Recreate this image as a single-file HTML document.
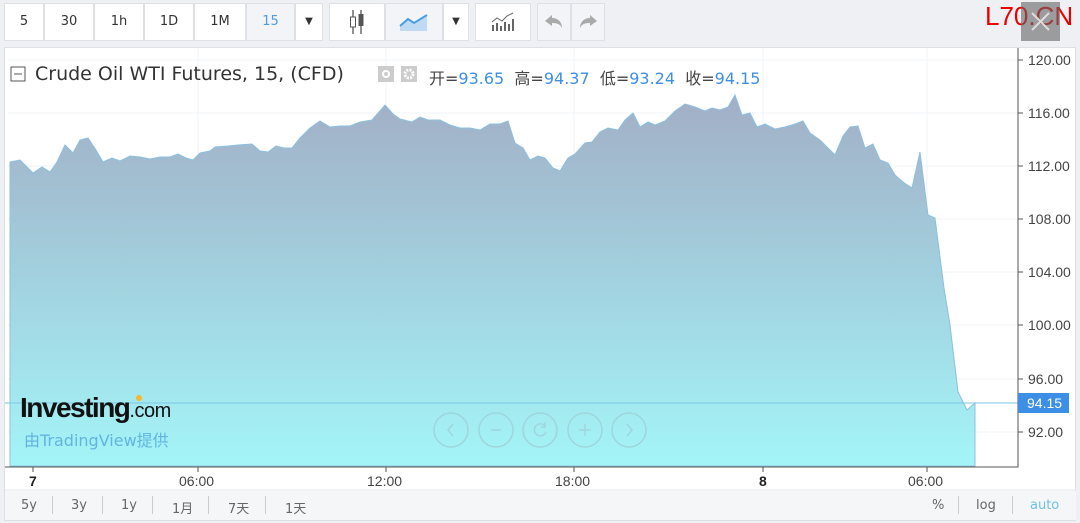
<!DOCTYPE html>
<html><head><meta charset="utf-8"><style>
*{margin:0;padding:0;box-sizing:border-box}
body{width:1080px;height:523px;background:#eef0f3;font-family:"DejaVu Sans","Liberation Sans","Noto Sans CJK SC",sans-serif;position:relative;overflow:hidden}
.b{position:absolute;top:3px;height:38px;background:#fff;border:1px solid #dde0e5;font-size:13px;color:#333;text-align:center;line-height:36px}
.t{position:absolute;font-family:"Liberation Sans",sans-serif;font-size:14px;color:#444}
.f{position:absolute;font-size:13px;color:#666;top:498px}
.sep{position:absolute;top:496px;width:1px;height:18px;background:#ccc}
</style></head><body>
<div class="b" style="left:4px;width:40px">5</div>
<div class="b" style="left:44px;width:50px">30</div>
<div class="b" style="left:94px;width:50px">1h</div>
<div class="b" style="left:144px;width:50px">1D</div>
<div class="b" style="left:194px;width:52px">1M</div>
<div class="b" style="left:246px;width:49px;background:#f2f4f7;color:#4a9de0">15</div>
<div class="b" style="left:295px;width:28px;font-size:10px">▼</div>
<div class="b" style="left:329px;width:56px"><svg width="20" height="26" viewBox="0 0 20 26" style="margin-top:5px"><path d="M6 1v24M14 1v24" stroke="#555" stroke-width="1.3"/><rect x="3.5" y="8" width="5" height="10" fill="#fff" stroke="#555"/><rect x="11.5" y="5" width="5" height="12" fill="#555"/></svg></div>
<div class="b" style="left:385px;width:58px;background:#f2f4f7"><svg width="30" height="20" viewBox="0 0 30 20" style="margin-top:8px"><path d="M1 14 L9 7 L15 11 L28 3 V19 H1Z" fill="#bfdaf2"/><path d="M1 14 L9 7 L15 11 L28 3" stroke="#4a9de0" stroke-width="2" fill="none"/></svg></div>
<div class="b" style="left:443px;width:26px;font-size:10px">▼</div>
<div class="b" style="left:475px;width:56px"><svg width="24" height="20" viewBox="0 0 24 20" style="margin-top:8px"><path d="M2 19v-6M6 19v-8M10 19v-5M14 19v-9M18 19v-7M22 19v-12" stroke="#666" stroke-width="2"/><path d="M1 10 L6 6 L11 9 L16 4 L22 1" stroke="#666" fill="none"/></svg></div>
<div class="b" style="left:537px;width:34px;background:#f2f4f7"><svg width="20" height="16" viewBox="0 0 20 16" style="margin-top:10px"><path d="M1 7L8 1V4C14 4 18 8 18 14C16 10 13 9 8 9V12Z" fill="#aaa"/></svg></div>
<div class="b" style="left:571px;width:34px;background:#f2f4f7"><svg width="20" height="16" viewBox="0 0 20 16" style="margin-top:10px"><path d="M19 7L12 1V4C6 4 2 8 2 14C4 10 7 9 12 9V12Z" fill="#aaa"/></svg></div>
<div style="position:absolute;left:985px;top:1px;font-family:'Liberation Sans',sans-serif;font-size:26px;color:#e00">L70.CN</div>
<div style="position:absolute;left:1021px;top:2px;width:39px;height:39px;background:rgba(100,100,100,.6)"><svg width="39" height="39"><path d="M11 11L28 28M28 11L11 28" stroke="#ddd" stroke-width="2"/></svg></div>
<div style="position:absolute;left:4px;top:47px;width:1072px;height:474px;background:#fff;border:1px solid #dde0e5"></div>
<svg style="position:absolute;left:0;top:0" width="1080" height="523">
<defs><linearGradient id="g" x1="0" y1="0" x2="0" y2="1"><stop offset="0" stop-color="#a2aec6"/><stop offset="1" stop-color="#a3f5f8"/></linearGradient></defs>
<g stroke="#f2f3f5"><path d="M8 60H1018M8 113H1018M8 166H1018M8 219H1018M8 272H1018M8 325H1018M8 379H1018M8 432H1018M198 48V467M386 48V467M574 48V467M763 48V467M927 48V467"/></g>
<path fill="url(#g)" stroke="#8cc0e0" stroke-width="1" d="M10 162L20 160L33 173L42 167L50 172L57 162L65 145L73 153L80 140L88 138L96 150L103 162L112 158L120 161L130 156L140 157L150 159L160 157L170 157L178 154L186 158L193 160L200 153L210 151L215 147L228 146L238 145L252 144L260 151L268 152L276 146L284 148L292 148L300 138L310 128L320 121L330 127L340 126L350 126L360 122L372 120L385 105L393 114L400 119L412 122L420 117L428 120L440 120L450 125L460 128L470 128L480 130L490 124L500 124L508 121L515 143L523 148L530 160L538 156L545 158L553 168L560 171L568 158L575 154L585 143L592 142L600 132L608 128L618 130L625 120L633 113L640 127L648 122L655 125L665 121L675 111L685 104L695 107L705 111L712 108L720 110L728 107L735 95L742 115L750 113L757 127L765 124L775 129L785 127L795 124L803 121L810 133L820 140L830 150L835 155L843 136L850 127L858 126L865 148L873 144L880 160L888 163L895 175L903 182L912 188L920 152L928 215L935 218L944 288L950 325L958 392L967 410L975 403V466H10Z"/>
<path d="M5 403H1018" stroke="#7cc6e6" stroke-width="1"/>
<path d="M1018 48V467H5" stroke="#555" fill="none"/>
<g stroke="#555"><path d="M1018 60h5M1018 113h5M1018 166h5M1018 219h5M1018 272h5M1018 325h5M1018 379h5M1018 432h5M33 467v5M198 467v5M386 467v5M574 467v5M763 467v5M927 467v5"/></g>
<path d="M5 490H1076" stroke="#e3e5e8"/>
<rect x="5" y="491" width="1071" height="29" fill="#f5f6f8"/>
<rect x="1018" y="393" width="51" height="20" fill="#3d8fe6"/>
<g fill="none" stroke="#9fd6dc" stroke-width="1.5"><circle cx="451" cy="430" r="17"/><circle cx="496" cy="430" r="17"/><circle cx="540" cy="430" r="17"/><circle cx="585" cy="430" r="17"/><circle cx="629" cy="430" r="17"/><path d="M453 424l-5 6l5 6M491 430h10M585 424v12M579 430h12M627 424l5 6l-5 6M545 426a6 6 0 1 0 1 6M545 422v5h-4"/></g>
<rect x="11" y="67" width="14" height="14" fill="#fff" stroke="#555"/><path d="M14 74h8" stroke="#555"/>
<rect x="378" y="66" width="16" height="16" fill="#ccc"/><circle cx="386" cy="74" r="4" fill="#fff"/><circle cx="386" cy="74" r="2" fill="#ccc"/>
<rect x="401" y="66" width="16" height="16" fill="#ccc"/><circle cx="409" cy="74" r="4" fill="none" stroke="#fff" stroke-width="3" stroke-dasharray="2 1.2"/>
<circle cx="139" cy="398" r="3" fill="#f5b82e"/>
</svg>
<div style="position:absolute;left:35px;top:63px;font-size:19px;color:#333">Crude Oil WTI Futures, 15, (CFD)</div>
<div style="position:absolute;left:429px;top:65px;font-size:16px;color:#444">开=<span style="color:#3d8fe6">93.65</span>&nbsp; 高=<span style="color:#3d8fe6">94.37</span>&nbsp; 低=<span style="color:#3d8fe6">93.24</span>&nbsp; 收=<span style="color:#3d8fe6">94.15</span></div>
<div class="t" style="left:1028px;top:52px">120.00</div><div class="t" style="left:1028px;top:105px">116.00</div><div class="t" style="left:1028px;top:158px">112.00</div><div class="t" style="left:1028px;top:211px">108.00</div><div class="t" style="left:1028px;top:264px">104.00</div><div class="t" style="left:1028px;top:317px">100.00</div><div class="t" style="left:1028px;top:371px">96.00</div><div class="t" style="left:1028px;top:424px">92.00</div>
<div class="t" style="left:1027px;top:395px;color:#fff">94.15</div>
<div class="t" style="left:29px;top:473px;color:#222;font-weight:bold">7</div><div class="t" style="left:179px;top:473px">06:00</div><div class="t" style="left:367px;top:473px">12:00</div><div class="t" style="left:555px;top:473px">18:00</div><div class="t" style="left:759px;top:473px;color:#222;font-weight:bold">8</div><div class="t" style="left:908px;top:473px">06:00</div>
<div style="position:absolute;left:20px;top:392px;font-family:'Liberation Sans',sans-serif;font-weight:bold;font-size:28px;letter-spacing:-1.5px;color:#111">Investing<span style="font-weight:normal;font-size:20px;letter-spacing:-0.5px">.com</span></div>
<div style="position:absolute;left:24px;top:427px;font-size:16px;color:#62b4e0">由TradingView提供</div>
<div class="f" style="left:21px">5y</div><div class="sep" style="left:52px"></div>
<div class="f" style="left:71px">3y</div><div class="sep" style="left:102px"></div>
<div class="f" style="left:121px">1y</div><div class="sep" style="left:152px"></div>
<div class="f" style="left:172px">1月</div><div class="sep" style="left:208px"></div>
<div class="f" style="left:228px">7天</div><div class="sep" style="left:265px"></div>
<div class="f" style="left:285px">1天</div>
<div class="f" style="left:932px">%</div><div class="sep" style="left:958px"></div>
<div class="f" style="left:976px">log</div><div class="sep" style="left:1012px"></div>
<div class="f" style="left:1030px;color:#6fc0e6">auto</div>
</body></html>
